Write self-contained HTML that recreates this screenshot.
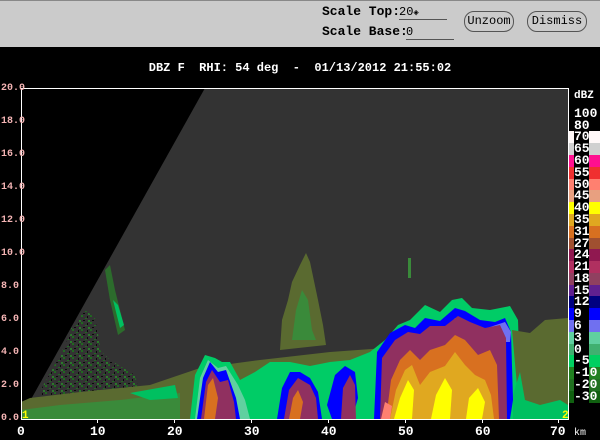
<!DOCTYPE html>
<html><head><meta charset="utf-8"><style>
*{margin:0;padding:0;box-sizing:border-box}
body{width:600px;height:440px;background:#000;position:relative;overflow:hidden;font-family:"Liberation Mono",monospace}
.bar{position:absolute;left:0;top:0;width:600px;height:47px;background:#cbcbcb;border-top:1px solid #888}
.lbl{position:absolute;font:bold 13px "Liberation Mono",monospace;color:#000}
.inp{position:absolute;font:12px "Liberation Mono",monospace;color:#000;border-bottom:1px solid #555;height:15px}
.btn{position:absolute;top:10px;height:21px;border:1px solid #555;border-radius:10px;font:12px "Liberation Mono",monospace;text-align:center;line-height:19px;background:#cbcbcb}
.title{position:absolute;top:61px;left:0;width:600px;text-align:center;color:#fff;font:bold 12px "Liberation Mono",monospace;white-space:pre}
.yl{position:absolute;left:1px;color:#f4b4b4;font:bold 10px "Liberation Mono",monospace}
.xl{position:absolute;top:424px;color:#fff;font:bold 13px "Liberation Mono",monospace}
.sc{position:absolute;left:569px;width:31px;height:12px}
.sc span{position:absolute;left:5px;top:0;background:#000;color:#fff;font:bold 13px "Liberation Mono",monospace;line-height:12px;width:15px;white-space:nowrap;overflow:visible}
</style></head><body>
<div class="bar">
<div class="lbl" style="left:322px;top:3px">Scale Top:</div>
<div class="inp" style="left:399px;top:4px;width:48px">20<span style="font-size:9px">◈</span></div>
<div class="lbl" style="left:322px;top:23px">Scale Base:</div>
<div class="inp" style="left:406px;top:24px;width:48px">0</div>
<div class="btn" style="left:464px;width:50px">Unzoom</div>
<div class="btn" style="left:527px;width:60px">Dismiss</div>
</div>
<div class="title">DBZ F  RHI: 54 deg  -  01/13/2012 21:55:02</div>

<svg style="position:absolute;left:0;top:0" width="600" height="440">
<defs>
<pattern id="clut" width="9" height="7" patternUnits="userSpaceOnUse">
<rect x="0" y="0" width="2" height="2" fill="#1f6a1f"/><rect x="4" y="3" width="2" height="1" fill="#1f6a1f"/><rect x="6" y="1" width="1" height="2" fill="#0a0a0a"/><rect x="2" y="5" width="2" height="1" fill="#0a0a0a"/><rect x="7" y="5" width="2" height="2" fill="#2a7a2a"/>
</pattern>
</defs>
<polygon points="20,419 205,88 568,88 568,419" fill="#333"/>
<polygon points="38,395 60,355 75,325 85,320 95,330 100,350 110,360 135,375 140,395" fill="url(#clut)"/>
<polygon points="70,330 85,310 95,318 100,345 80,345" fill="url(#clut)"/>
<polygon points="105,270 110,265 115,290 120,310 125,330 118,335 110,300" fill="#2a7a2a" opacity=".8"/>
<polygon points="113,300 118,305 124,325 120,328" fill="#00c060"/>
<!-- base olive band -->
<polygon points="21,419 21,402 30,398 80,392 150,385 200,368 260,360 330,352 400,347 480,343 540,335 568,345 568,419" fill="#5a6a30"/>
<polygon points="21,419 21,410 60,405 120,400 180,393 180,419" fill="#3a8a3a"/>
<polygon points="130,393 175,385 178,398 150,400" fill="#00c060"/>
<!-- tall olive cloud -->
<polygon points="280,350 282,320 288,300 292,282 300,265 306,253 310,262 318,300 323,325 326,345" fill="#5a6a30"/>
<polygon points="292,340 296,310 302,290 308,300 312,330 316,340" fill="#3a8a3a"/>
<rect x="408" y="258" width="3" height="20" fill="#3a8a3a"/>
<!-- green halo -->
<polygon points="190,419 195,375 205,355 215,358 222,362 230,362 240,380 255,372 270,362 290,362 310,366 330,362 350,360 370,352 385,340 398,325 410,320 425,305 440,312 452,300 462,298 472,308 490,310 510,306 518,320 520,380 522,419" fill="#00cc66"/>
<polygon points="195,419 200,378 208,360 218,368 226,366 238,385 245,400 250,419" fill="#60d0a0"/>
<!-- blue layers -->
<g fill="#0000ff">
<polygon points="197,419 203,378 210,362 218,372 226,370 236,398 240,419"/>
<polygon points="277,419 282,388 290,372 300,372 310,378 318,392 322,419"/>
<polygon points="327,405 335,375 345,366 355,372 358,398 352,419 332,419"/>
<polygon points="374,419 377,352 390,333 405,325 415,328 425,318 440,321 455,308 465,311 480,320 495,322 505,318 511,332 513,400 510,419"/>
</g>
<polygon points="440,342 455,318 470,323 480,332 490,327 505,322 511,332 510,342" fill="#7070f0"/>
<!-- maroon cores -->
<g fill="#903060">
<polygon points="201,419 206,382 212,370 220,382 228,380 234,402 236,419"/>
<polygon points="284,419 289,390 298,378 310,385 316,398 318,419"/>
<polygon points="341,419 343,388 350,375 355,385 356,419"/>
<polygon points="380,419 382,358 395,340 408,332 420,334 430,326 445,326 458,316 470,322 485,328 500,325 506,338 507,419"/>
</g>
<!-- orange -->
<g fill="#d87020">
<polygon points="204,419 208,385 213,378 218,398 215,419"/>
<polygon points="289,419 293,398 298,390 303,402 300,419"/>
<polygon points="386,419 391,380 400,360 410,350 420,360 430,350 445,345 455,335 465,340 478,355 490,350 497,365 499,419"/>
</g>
<g fill="#e0a820">
<polygon points="390,419 396,390 405,370 412,365 420,385 430,372 445,366 455,352 465,365 475,375 485,380 491,395 494,419"/>
</g>
<g fill="#ffff00">
<polygon points="394,419 400,398 408,380 414,390 412,419"/>
<polygon points="431,419 436,395 445,378 452,390 450,419"/>
<polygon points="466,419 469,398 478,388 485,402 482,419"/>
</g>
<polygon points="381,419 385,402 392,406 390,419" fill="#ff8070"/>
<!-- right side -->
<polygon points="512,330 530,333 545,320 568,318 568,419 520,419" fill="#5a6a30"/>
<polygon points="513,395 520,372 525,400 540,405 560,400 568,405 568,419 513,419" fill="#00c060"/>
<!-- axes -->
<line x1="21" y1="88.5" x2="569" y2="88.5" stroke="#fff"/>
<line x1="21.5" y1="88" x2="21.5" y2="420" stroke="#fff"/>
<line x1="21" y1="419.5" x2="569" y2="419.5" stroke="#fff"/>
<line x1="568.5" y1="88" x2="568.5" y2="420" stroke="#fff"/>
<g stroke="#fff"><line x1="97.5" y1="419" x2="97.5" y2="423"/><line x1="174.5" y1="419" x2="174.5" y2="423"/><line x1="251.5" y1="419" x2="251.5" y2="423"/><line x1="328.5" y1="419" x2="328.5" y2="423"/><line x1="405.5" y1="419" x2="405.5" y2="423"/><line x1="482.5" y1="419" x2="482.5" y2="423"/><line x1="558.5" y1="419" x2="558.5" y2="423"/></g>
<text x="22" y="418" fill="#ffff00" font-family="Liberation Mono" font-size="11" font-weight="bold">1</text>
<text x="562" y="418" fill="#ffff00" font-family="Liberation Mono" font-size="11" font-weight="bold">2</text>
</svg>

<div class="yl" style="top:83px">20.0</div>
<div class="yl" style="top:116px">18.0</div>
<div class="yl" style="top:149px">16.0</div>
<div class="yl" style="top:182px">14.0</div>
<div class="yl" style="top:215px">12.0</div>
<div class="yl" style="top:248px">10.0</div>
<div class="yl" style="top:281px">8.0</div>
<div class="yl" style="top:314px">6.0</div>
<div class="yl" style="top:347px">4.0</div>
<div class="yl" style="top:380px">2.0</div>
<div class="yl" style="top:413px">0.0</div>

<div class="xl" style="left:17px">0</div>
<div class="xl" style="left:90px">10</div>
<div class="xl" style="left:167px">20</div>
<div class="xl" style="left:244px">30</div>
<div class="xl" style="left:321px">40</div>
<div class="xl" style="left:398px">50</div>
<div class="xl" style="left:475px">60</div>
<div class="xl" style="left:550px">70</div>
<div style="position:absolute;left:574px;top:428px;color:#fff;font:10px 'Liberation Mono',monospace">km</div>

<div style="position:absolute;left:574px;top:90px;color:#fff;font:bold 11px 'Liberation Mono',monospace">dBZ</div>
<div class="sc" style="top:108px"><span>100</span></div>
<div class="sc" style="top:120px"><span>80</span></div>
<div class="sc" style="top:131px;background:#fff8f8"><span>70</span></div>
<div class="sc" style="top:143px;background:#d0d0d0"><span>65</span></div>
<div class="sc" style="top:155px;background:#ff1090"><span>60</span></div>
<div class="sc" style="top:167px;background:#f03030"><span>55</span></div>
<div class="sc" style="top:179px;background:#ff8070"><span>50</span></div>
<div class="sc" style="top:190px;background:#e8a080"><span>45</span></div>
<div class="sc" style="top:202px;background:#ffff00"><span>40</span></div>
<div class="sc" style="top:214px;background:#e0a820"><span>35</span></div>
<div class="sc" style="top:226px;background:#d87020"><span>31</span></div>
<div class="sc" style="top:238px;background:#a05030"><span>27</span></div>
<div class="sc" style="top:249px;background:#901850"><span>24</span></div>
<div class="sc" style="top:261px;background:#b03060"><span>21</span></div>
<div class="sc" style="top:273px;background:#904060"><span>18</span></div>
<div class="sc" style="top:285px;background:#602090"><span>15</span></div>
<div class="sc" style="top:296px;background:#000080"><span>12</span></div>
<div class="sc" style="top:308px;background:#0000ff"><span>9</span></div>
<div class="sc" style="top:320px;background:#7070f0"><span>6</span></div>
<div class="sc" style="top:332px;background:#60d0a0"><span>3</span></div>
<div class="sc" style="top:344px;background:#40b070"><span>0</span></div>
<div class="sc" style="top:355px;background:#00d060"><span>-5</span></div>
<div class="sc" style="top:367px;background:#208020"><span>-10</span></div>
<div class="sc" style="top:379px;background:#207020"><span>-20</span></div>
<div class="sc" style="top:391px;background:#106010"><span>-30</span></div>
</body></html>
